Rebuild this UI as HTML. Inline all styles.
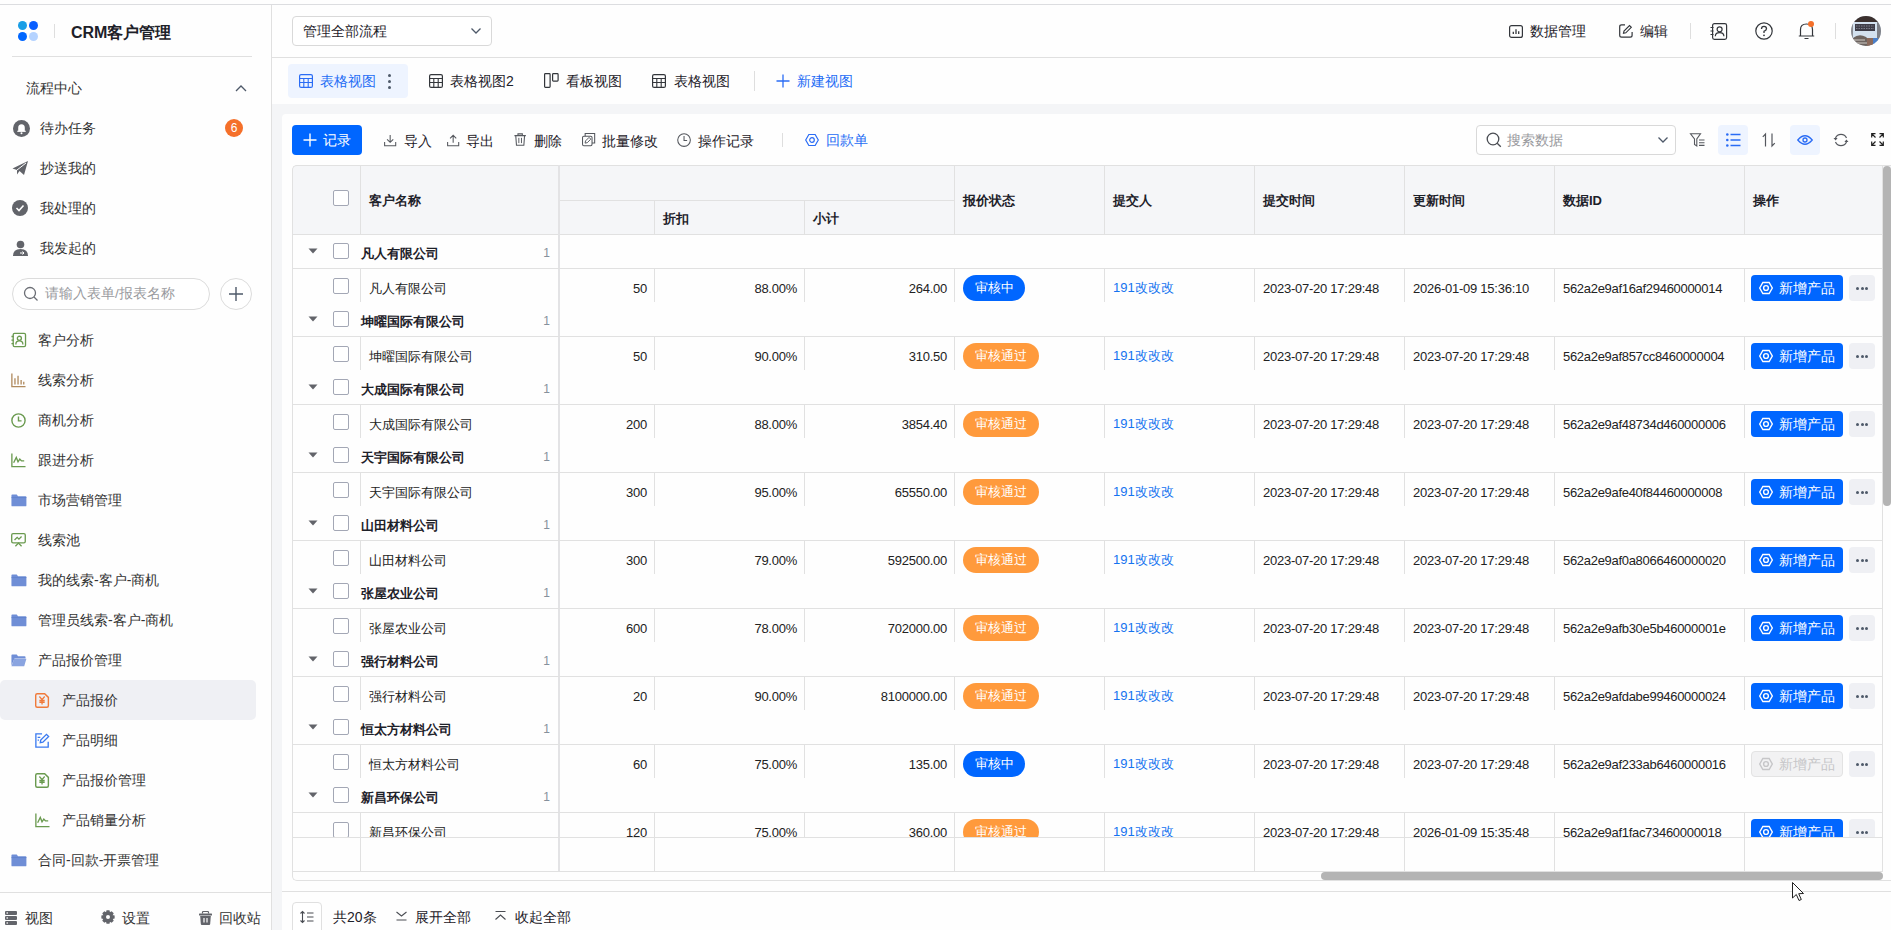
<!DOCTYPE html><html><head><meta charset="utf-8"><style>
*{box-sizing:border-box;margin:0;padding:0}
html,body{width:1891px;height:930px;overflow:hidden;background:#fefefe;font-family:"Liberation Sans",sans-serif;color:#1d2129}
.ab{position:absolute}
.t{position:absolute;white-space:nowrap;line-height:1}
svg{position:absolute;overflow:visible}
</style></head><body>
<div class="ab" style="left:0;top:4px;width:1891px;height:1px;background:#dcdde0"></div>
<div class="ab" style="left:0;top:5px;width:271px;height:925px;background:#fefefe"></div>
<div class="ab" style="left:271px;top:5px;width:1px;height:925px;background:#e0e0e0"></div>
<div class="ab" style="left:17.900000000000002px;top:20.900000000000002px;width:9.4px;height:9.4px;border-radius:50%;background:#199ee6"></div>
<div class="ab" style="left:28.900000000000002px;top:21.1px;width:9.4px;height:9.4px;border-radius:50%;background:#0a5fff"></div>
<div class="ab" style="left:17.900000000000002px;top:31.599999999999998px;width:9.4px;height:9.4px;border-radius:50%;background:#0066ff"></div>
<div class="ab" style="left:28.900000000000002px;top:31.599999999999998px;width:9.4px;height:9.4px;border-radius:50%;background:#b5d3ff"></div>
<div class="ab" style="left:54px;top:24px;width:1px;height:14px;background:#dedede"></div>
<div class="t" style="left:71px;top:24.5px;font-size:16px;font-weight:bold;color:#1d2129">CRM客户管理</div>
<div class="ab" style="left:12px;top:56px;width:240px;height:1px;background:#e0e0e0"></div>
<div class="t" style="left:26px;top:81px;font-size:14px;color:#333">流程中心</div>
<svg style="left:235px;top:84px" width="12" height="8"><path d="M1 7 L6 2 L11 7" fill="none" stroke="#4e5969" stroke-width="1.3"/></svg>
<div class="t" style="left:40px;top:121px;font-size:14px;color:#333">待办任务</div>
<div class="t" style="left:40px;top:161px;font-size:14px;color:#333">抄送我的</div>
<div class="t" style="left:40px;top:201px;font-size:14px;color:#333">我处理的</div>
<div class="t" style="left:40px;top:241px;font-size:14px;color:#333">我发起的</div>
<div class="ab" style="left:12.5px;top:119.8px;width:17px;height:17px;border-radius:50%;background:#62646a"></div>
<svg style="left:12.5px;top:119.8px" width="17" height="17"><path d="M5.2 11 V8 Q5.2 4.3 8.5 4.3 Q11.8 4.3 11.8 8 V11 Z" fill="#fff"/><path d="M4.3 11.3 H12.7" stroke="#fff" stroke-width="1.2"/><circle cx="8.5" cy="13.2" r="1" fill="#fff"/></svg>
<div class="ab" style="left:225px;top:119px;width:18px;height:18px;border-radius:50%;background:#f5702a;color:#fff;font-size:12px;line-height:18px;text-align:center">6</div>
<svg style="left:12px;top:160px" width="17" height="16"><path d="M0.5 8.5 L16 1 L12 15 L7.5 11 L5 14.5 L5 10 Z" fill="#62646a"/><path d="M5 10 L14 3" stroke="#fcfcfd" stroke-width="1"/></svg>
<div class="ab" style="left:12px;top:200px;width:16px;height:16px;border-radius:50%;background:#62646a"></div>
<svg style="left:12px;top:200px" width="16" height="16"><path d="M4.5 8 L7 10.5 L11.5 5.5" fill="none" stroke="#fff" stroke-width="1.6"/></svg>
<svg style="left:12px;top:240px" width="17" height="17"><circle cx="8.5" cy="4.5" r="3.8" fill="#62646a"/><path d="M1 16 Q1 9 8.5 9 Q16 9 16 16 Z" fill="#62646a"/><path d="M8 13 H12 M10.5 11.5 L12 13 L10.5 14.5" fill="none" stroke="#fff" stroke-width="1"/></svg>
<div class="ab" style="left:12px;top:278px;width:198px;height:32px;border:1px solid #dcdcdc;border-radius:16px;background:#fff"></div>
<svg style="left:23px;top:286px" width="16" height="16"><circle cx="7" cy="7" r="5.5" fill="none" stroke="#6b6e75" stroke-width="1.3"/><path d="M11 11 L14.5 14.5" stroke="#6b6e75" stroke-width="1.3"/></svg>
<div class="t" style="left:45px;top:287px;font-size:13.5px;color:#999a9e">请输入表单/报表名称</div>
<div class="ab" style="left:220px;top:278px;width:32px;height:32px;border:1px solid #dcdcdc;border-radius:50%;background:#fff"></div>
<svg style="left:228px;top:286px" width="16" height="16"><path d="M8 1 V15 M1 8 H15" stroke="#4e5969" stroke-width="1.4"/></svg>
<div class="ab" style="left:0;top:680px;width:256px;height:40px;border-radius:5px;background:#eff0f4"></div>
<div class="t" style="left:38px;top:333px;font-size:14px;color:#333">客户分析</div>
<svg style="transform:scale(0.88);transform-origin:0 0;margin-top:1px;left:11px;top:332px" width="17" height="16"><rect x="2.5" y="0.5" width="14" height="15" rx="1.5" fill="none" stroke="#6a9a4f" stroke-width="1.5"/><circle cx="9.5" cy="6" r="2.3" fill="none" stroke="#6a9a4f" stroke-width="1.5"/><path d="M5.5 13 Q5.5 9 9.5 9 Q13.5 9 13.5 13" fill="none" stroke="#6a9a4f" stroke-width="1.5"/><path d="M0.5 4 H3 M0.5 8 H3 M0.5 12 H3" stroke="#6a9a4f" stroke-width="1.5"/></svg>
<div class="t" style="left:38px;top:373px;font-size:14px;color:#333">线索分析</div>
<svg style="transform:scale(0.88);transform-origin:0 0;margin-top:1px;left:11px;top:372px" width="17" height="16"><path d="M1 0.5 V15.5 H16.5 M4.5 6 V13 M8 3 V13 M11.5 8 V13 M14.5 10 V13" fill="none" stroke="#b08a5e" stroke-width="1.5"/></svg>
<div class="t" style="left:38px;top:413px;font-size:14px;color:#333">商机分析</div>
<svg style="transform:scale(0.88);transform-origin:0 0;margin-top:1px;left:11px;top:412px" width="17" height="17"><circle cx="8.5" cy="8.5" r="7.5" fill="none" stroke="#6a9a4f" stroke-width="1.6"/><path d="M8.5 4 V9 H12" fill="none" stroke="#6a9a4f" stroke-width="1.6"/></svg>
<div class="t" style="left:38px;top:453px;font-size:14px;color:#333">跟进分析</div>
<svg style="transform:scale(0.88);transform-origin:0 0;margin-top:1px;left:11px;top:452px" width="17" height="16"><path d="M1 0.5 V15.5 H16.5" fill="none" stroke="#6a9a4f" stroke-width="1.5"/><path d="M3 11 L6 5 L8 10 L10 7 L12 9 L15 9" fill="none" stroke="#6a9a4f" stroke-width="1.5"/></svg>
<div class="t" style="left:38px;top:493px;font-size:14px;color:#333">市场营销管理</div>
<svg style="transform:scale(0.88);transform-origin:0 0;margin-top:1px;left:11px;top:493px" width="18" height="14"><path d="M0.5 1.5 Q0.5 0.5 1.5 0.5 H6.5 L8 2.5 H16.5 Q17.5 2.5 17.5 3.5 V13 Q17.5 14 16.5 14 H1.5 Q0.5 14 0.5 13 Z" fill="#6f8ed6"/><path d="M0.5 4 H17.5" stroke="#5d7fcc" stroke-width="0.8"/></svg>
<div class="t" style="left:38px;top:533px;font-size:14px;color:#333">线索池</div>
<svg style="transform:scale(0.88);transform-origin:0 0;margin-top:1px;left:11px;top:532px" width="17" height="16"><rect x="0.8" y="0.8" width="15.4" height="10.5" rx="1.5" fill="none" stroke="#6a9a4f" stroke-width="1.5"/><path d="M4 8 L7 5 L9 7 L12 4 M5 15 L8.5 11.5 L12 15" fill="none" stroke="#6a9a4f" stroke-width="1.5"/></svg>
<div class="t" style="left:38px;top:573px;font-size:14px;color:#333">我的线索-客户-商机</div>
<svg style="transform:scale(0.88);transform-origin:0 0;margin-top:1px;left:11px;top:573px" width="18" height="14"><path d="M0.5 1.5 Q0.5 0.5 1.5 0.5 H6.5 L8 2.5 H16.5 Q17.5 2.5 17.5 3.5 V13 Q17.5 14 16.5 14 H1.5 Q0.5 14 0.5 13 Z" fill="#6f8ed6"/><path d="M0.5 4 H17.5" stroke="#5d7fcc" stroke-width="0.8"/></svg>
<div class="t" style="left:38px;top:613px;font-size:14px;color:#333">管理员线索-客户-商机</div>
<svg style="transform:scale(0.88);transform-origin:0 0;margin-top:1px;left:11px;top:613px" width="18" height="14"><path d="M0.5 1.5 Q0.5 0.5 1.5 0.5 H6.5 L8 2.5 H16.5 Q17.5 2.5 17.5 3.5 V13 Q17.5 14 16.5 14 H1.5 Q0.5 14 0.5 13 Z" fill="#6f8ed6"/><path d="M0.5 4 H17.5" stroke="#5d7fcc" stroke-width="0.8"/></svg>
<div class="t" style="left:38px;top:653px;font-size:14px;color:#333">产品报价管理</div>
<svg style="transform:scale(0.88);transform-origin:0 0;margin-top:1px;left:11px;top:653px" width="18" height="14"><path d="M0.5 1.5 Q0.5 0.5 1.5 0.5 H6.5 L8 2.5 H15.5 Q16.5 2.5 16.5 3.5 V5 H4 L0.5 13 Z" fill="#6f8ed6"/><path d="M3.5 5.5 H17.5 L15 14 H0.5 Z" fill="#8aa4e0"/></svg>
<div class="t" style="left:62px;top:693px;font-size:14px;color:#333">产品报价</div>
<svg style="transform:scale(0.88);transform-origin:0 0;margin-top:1px;left:35px;top:692px" width="16" height="17"><path d="M2.5 0.8 H11 L15.2 5 V14.5 Q15.2 16.2 13.5 16.2 H2.5 Q0.8 16.2 0.8 14.5 V2.5 Q0.8 0.8 2.5 0.8 Z" fill="none" stroke="#f07a3a" stroke-width="1.6"/><path d="M5 4 L8 7.5 L11 4 M8 7.5 V13 M5 8.5 H11 M5 10.5 H11" fill="none" stroke="#f07a3a" stroke-width="1.5"/></svg>
<div class="t" style="left:62px;top:733px;font-size:14px;color:#333">产品明细</div>
<svg style="transform:scale(0.88);transform-origin:0 0;margin-top:1px;left:35px;top:732px" width="17" height="17"><path d="M8 1 H1 V16 H15 V10" fill="none" stroke="#3a7af0" stroke-width="1.5"/><path d="M6 11 L6.5 8 L13 1.5 L15.5 4 L9 10.5 Z" fill="none" stroke="#3a7af0" stroke-width="1.5"/><path d="M3 5 H6 M3 8 H4.5" stroke="#3a7af0" stroke-width="1.5"/></svg>
<div class="t" style="left:62px;top:773px;font-size:14px;color:#333">产品报价管理</div>
<svg style="transform:scale(0.88);transform-origin:0 0;margin-top:1px;left:35px;top:772px" width="16" height="17"><path d="M2.5 0.8 H11 L15.2 5 V14.5 Q15.2 16.2 13.5 16.2 H2.5 Q0.8 16.2 0.8 14.5 V2.5 Q0.8 0.8 2.5 0.8 Z" fill="none" stroke="#6a9a4f" stroke-width="1.6"/><path d="M5 4 L8 7.5 L11 4 M8 7.5 V13 M5 8.5 H11 M5 10.5 H11" fill="none" stroke="#6a9a4f" stroke-width="1.5"/></svg>
<div class="t" style="left:62px;top:813px;font-size:14px;color:#333">产品销量分析</div>
<svg style="transform:scale(0.88);transform-origin:0 0;margin-top:1px;left:35px;top:812px" width="17" height="16"><path d="M1 0.5 V15.5 H16.5" fill="none" stroke="#6a9a4f" stroke-width="1.5"/><path d="M3 11 L6 5 L8 10 L10 7 L12 9 L15 9" fill="none" stroke="#6a9a4f" stroke-width="1.5"/></svg>
<div class="t" style="left:38px;top:853px;font-size:14px;color:#333">合同-回款-开票管理</div>
<svg style="transform:scale(0.88);transform-origin:0 0;margin-top:1px;left:11px;top:853px" width="18" height="14"><path d="M0.5 1.5 Q0.5 0.5 1.5 0.5 H6.5 L8 2.5 H16.5 Q17.5 2.5 17.5 3.5 V13 Q17.5 14 16.5 14 H1.5 Q0.5 14 0.5 13 Z" fill="#6f8ed6"/><path d="M0.5 4 H17.5" stroke="#5d7fcc" stroke-width="0.8"/></svg>
<div class="ab" style="left:0;top:892px;width:271px;height:1px;background:#e0e0e0"></div>
<svg style="left:5px;top:911px" width="13" height="14"><rect x="0" y="0" width="12" height="4" rx="1" fill="#62646a"/><rect x="0" y="5" width="12" height="4" rx="1" fill="#62646a"/><rect x="0" y="10" width="12" height="4" rx="1" fill="#62646a"/><rect x="1.5" y="1.4" width="1.5" height="1.2" fill="#fefefe"/><rect x="1.5" y="6.4" width="1.5" height="1.2" fill="#fefefe"/><rect x="1.5" y="11.4" width="1.5" height="1.2" fill="#fefefe"/></svg>
<div class="t" style="left:25px;top:911px;font-size:14px;color:#333">视图</div>
<svg style="left:101px;top:910px" width="14" height="14"><path d="M11.57 4.96 L13.64 5.52 L13.64 8.48 L11.57 9.04 L11.67 8.79 L12.74 10.64 L10.64 12.74 L8.79 11.67 L9.04 11.57 L8.48 13.64 L5.52 13.64 L4.96 11.57 L5.21 11.67 L3.36 12.74 L1.26 10.64 L2.33 8.79 L2.43 9.04 L0.36 8.48 L0.36 5.52 L2.43 4.96 L2.33 5.21 L1.26 3.36 L3.36 1.26 L5.21 2.33 L4.96 2.43 L5.52 0.36 L8.48 0.36 L9.04 2.43 L8.79 2.33 L10.64 1.26 L12.74 3.36 L11.67 5.21 Z" fill="#62646a"/><circle cx="7" cy="7" r="2" fill="#fefefe"/></svg>
<div class="t" style="left:122px;top:911px;font-size:14px;color:#333">设置</div>
<svg style="left:199px;top:911px" width="13" height="14"><path d="M3.5 2.5 V1.3 Q3.5 0.5 4.3 0.5 H8.7 Q9.5 0.5 9.5 1.3 V2.5" fill="none" stroke="#62646a" stroke-width="1.2"/><rect x="0" y="2.5" width="13" height="2" rx="0.5" fill="#62646a"/><path d="M1.2 5 H11.8 L11.2 13 Q11.1 14 10.2 14 H2.8 Q1.9 14 1.8 13 Z" fill="#62646a"/><path d="M5 7 V11.5 M8 7 V11.5" stroke="#fefefe" stroke-width="1.2"/></svg>
<div class="t" style="left:219px;top:911px;font-size:14px;color:#333">回收站</div>
<div class="ab" style="left:272px;top:57px;width:1619px;height:1px;background:#e0e0e0"></div>
<div class="ab" style="left:292px;top:16px;width:200px;height:30px;border:1px solid #d9d9d9;border-radius:4px;background:#fff"></div>
<div class="t" style="left:303px;top:24px;font-size:14px;color:#1d2129">管理全部流程</div>
<svg style="left:470px;top:27px" width="12" height="8"><path d="M1.5 1.5 L6 6 L10.5 1.5" fill="none" stroke="#4e5969" stroke-width="1.3"/></svg>
<svg style="left:1509px;top:24.5px" width="14" height="13"><rect x="0.6" y="0.6" width="12.8" height="11.8" rx="2" fill="none" stroke="#33363b" stroke-width="1.2"/><path d="M4.3 9 V6.8 M7 9 V4.3 M9.7 9 V6.3" stroke="#33363b" stroke-width="1.3"/></svg>
<div class="t" style="left:1530px;top:24px;font-size:14px;color:#1d2129">数据管理</div>
<svg style="left:1619px;top:24px" width="14" height="14"><path d="M6 0.8 H2.6 Q0.7 0.8 0.7 2.7 V11.3 Q0.7 13.2 2.6 13.2 H11.2 Q13.1 13.2 13.1 11.3 V8" fill="none" stroke="#33363b" stroke-width="1.2"/><path d="M4.5 9.3 L5 7 L10.5 1.5 L12.3 3.3 L6.8 8.8 Z" fill="none" stroke="#33363b" stroke-width="1.15"/></svg>
<div class="t" style="left:1640px;top:24px;font-size:14px;color:#1d2129">编辑</div>
<div class="ab" style="left:1690px;top:23px;width:1px;height:16px;background:#dedede"></div>
<svg style="left:1710px;top:23px" width="18" height="17"><rect x="2.6" y="0.6" width="14" height="15.8" rx="1.8" fill="none" stroke="#33363b" stroke-width="1.2"/><circle cx="9.6" cy="6.3" r="2.5" fill="none" stroke="#33363b" stroke-width="1.2"/><path d="M5.3 13.3 Q5.3 9.6 9.6 9.6 Q13.9 9.6 13.9 13.3" fill="none" stroke="#33363b" stroke-width="1.2"/><path d="M0.5 4.5 H3.5 M0.5 8 H3.5 M0.5 11.5 H3.5" stroke="#33363b" stroke-width="1.1"/></svg>
<svg style="left:1755px;top:22px" width="18" height="18"><circle cx="9" cy="9" r="8.2" fill="none" stroke="#33363b" stroke-width="1.2"/><path d="M6.5 7 Q6.5 4.3 9 4.3 Q11.5 4.3 11.5 6.8 Q11.5 8.3 9 9.3 V11" fill="none" stroke="#33363b" stroke-width="1.3"/><circle cx="9" cy="13.3" r="0.9" fill="#33363b"/></svg>
<svg style="left:1798px;top:22px" width="17" height="18"><path d="M2.5 14 V7.5 Q2.5 2 8.5 2 Q14.5 2 14.5 7.5 V14 Z M0.8 14 H16.2 M6.5 16.5 H10.5" fill="none" stroke="#33363b" stroke-width="1.2"/></svg>
<div class="ab" style="left:1808px;top:21px;width:6px;height:6px;border-radius:50%;background:#f5702a"></div>
<div class="ab" style="left:1835px;top:23px;width:1px;height:16px;background:#dedede"></div>
<svg style="left:1851px;top:16px" width="30" height="30"><defs><clipPath id="av"><circle cx="15" cy="15" r="15"/></clipPath></defs><g clip-path="url(#av)"><rect width="30" height="30" fill="#d3e1ef"/><rect x="0" y="0" width="30" height="6" fill="#3b302e"/><rect x="26" y="5" width="4" height="25" fill="#7d7f86"/><rect x="0" y="5" width="2" height="20" fill="#8a8c92"/><rect x="4" y="8" width="20" height="7" fill="#3e3d48"/><path d="M5 10 H23 M5 12.5 H23" stroke="#8d8f9c" stroke-width="0.8" stroke-dasharray="1.5 1"/><path d="M2 30 L2 22 Q8 17 15 21 L23 29 L23 30 Z" fill="#6d6460"/><path d="M3 24 H14 M4 27 H16" stroke="#cfc9c4" stroke-width="1.2"/><rect x="16" y="22" width="6" height="8" fill="#8b6a5c"/><rect x="22" y="22" width="5" height="6" fill="#4a7fc8"/></g></svg>
<div class="ab" style="left:288px;top:64px;width:120px;height:34px;border-radius:4px;background:#eef4ff"></div>
<svg style="left:299px;top:74px" width="14" height="14"><rect x="0.6" y="0.6" width="12.8" height="12.8" rx="1.5" fill="none" stroke="#2a6cf5" stroke-width="1.2"/><path d="M0.6 4.5 H13.4 M0.6 8.5 H13.4 M4.8 4.5 V13.4 M9.2 4.5 V13.4" stroke="#2a6cf5" stroke-width="1.1"/></svg>
<div class="t" style="left:320px;top:74px;font-size:14px;color:#1d6cf5">表格视图</div>
<div class="ab" style="left:388px;top:74px;width:3px;height:3px;border-radius:50%;background:#4e5969"></div>
<div class="ab" style="left:388px;top:80px;width:3px;height:3px;border-radius:50%;background:#4e5969"></div>
<div class="ab" style="left:388px;top:86px;width:3px;height:3px;border-radius:50%;background:#4e5969"></div>
<svg style="left:429px;top:74px" width="14" height="14"><rect x="0.6" y="0.6" width="12.8" height="12.8" rx="1.5" fill="none" stroke="#33363b" stroke-width="1.2"/><path d="M0.6 4.5 H13.4 M0.6 8.5 H13.4 M4.8 4.5 V13.4 M9.2 4.5 V13.4" stroke="#33363b" stroke-width="1.1"/></svg>
<div class="t" style="left:450px;top:74px;font-size:14px;color:#1d2129">表格视图2</div>
<svg style="left:544px;top:73px" width="15" height="15"><rect x="0.6" y="0.6" width="5.5" height="13.8" rx="0.8" fill="none" stroke="#33363b" stroke-width="1.2"/><rect x="8.6" y="0.6" width="5.5" height="7.5" rx="0.8" fill="none" stroke="#33363b" stroke-width="1.2"/></svg>
<div class="t" style="left:566px;top:74px;font-size:14px;color:#1d2129">看板视图</div>
<svg style="left:652px;top:74px" width="14" height="14"><rect x="0.6" y="0.6" width="12.8" height="12.8" rx="1.5" fill="none" stroke="#33363b" stroke-width="1.2"/><path d="M0.6 4.5 H13.4 M0.6 8.5 H13.4 M4.8 4.5 V13.4 M9.2 4.5 V13.4" stroke="#33363b" stroke-width="1.1"/></svg>
<div class="t" style="left:674px;top:74px;font-size:14px;color:#1d2129">表格视图</div>
<div class="ab" style="left:754px;top:71px;width:1px;height:20px;background:#dedede"></div>
<svg style="left:776px;top:74px" width="14" height="14"><path d="M7 0.5 V13.5 M0.5 7 H13.5" stroke="#2a6cf5" stroke-width="1.3"/></svg>
<div class="t" style="left:797px;top:74px;font-size:14px;color:#1d6cf5">新建视图</div>
<div class="ab" style="left:272px;top:104px;width:1619px;height:826px;background:#f4f5f7"></div>
<div class="ab" style="left:282px;top:114px;width:1609px;height:816px;background:#fefefe;border-top-left-radius:4px"></div>
<div class="ab" style="left:292px;top:125px;width:70px;height:30px;border-radius:4px;background:#0066ff"></div>
<svg style="left:303px;top:133px" width="14" height="14"><path d="M7 0.5 V13.5 M0.5 7 H13.5" stroke="#fff" stroke-width="1.4"/></svg>
<div class="t" style="left:323px;top:133px;font-size:14px;color:#fff">记录</div>
<div class="t" style="left:404px;top:134px;font-size:14px;color:#1d2129">导入</div>
<svg style="transform:scale(0.88);transform-origin:0 0;margin:1px 0 0 1px;left:383px;top:133px" width="14" height="14"><path d="M7 1 V9.5 M3.5 6 L7 9.5 L10.5 6 M0.7 9 V13.3 H13.3 V9" fill="none" stroke="#55585e" stroke-width="1.2"/></svg>
<div class="t" style="left:466px;top:134px;font-size:14px;color:#1d2129">导出</div>
<svg style="transform:scale(0.88);transform-origin:0 0;margin:1px 0 0 1px;left:446px;top:133px" width="14" height="14"><path d="M7 10 V1.5 M3.5 5 L7 1.5 L10.5 5 M0.7 9 V13.3 H13.3 V9" fill="none" stroke="#55585e" stroke-width="1.2"/></svg>
<div class="t" style="left:534px;top:134px;font-size:14px;color:#1d2129">删除</div>
<svg style="transform:scale(0.88);transform-origin:0 0;margin:1px 0 0 1px;left:513px;top:132px" width="14" height="15"><path d="M4.5 2.5 V1 H9.5 V2.5 M0.5 3 H13.5 M2 3 L2.8 14 H11.2 L12 3" fill="none" stroke="#55585e" stroke-width="1.2"/><path d="M5.5 5.5 V11.5 M8.5 5.5 V11.5" stroke="#55585e" stroke-width="1.1"/></svg>
<div class="t" style="left:602px;top:134px;font-size:14px;color:#1d2129">批量修改</div>
<svg style="transform:scale(0.88);transform-origin:0 0;margin:1px 0 0 1px;left:581px;top:132px" width="15" height="15"><rect x="0.6" y="3.6" width="10.8" height="10.8" rx="1.5" fill="none" stroke="#55585e" stroke-width="1.2"/><path d="M3.6 3.6 V0.6 H14.4 V11.4 H11.4" fill="none" stroke="#55585e" stroke-width="1.2"/><path d="M3.5 11.5 L4 9 L8 5 L10 7 L6 11 Z" fill="none" stroke="#55585e" stroke-width="1.1"/></svg>
<div class="t" style="left:698px;top:134px;font-size:14px;color:#1d2129">操作记录</div>
<svg style="transform:scale(0.88);transform-origin:0 0;margin:1px 0 0 1px;left:676px;top:132px" width="16" height="16"><circle cx="8" cy="8" r="7.2" fill="none" stroke="#55585e" stroke-width="1.2"/><path d="M8 3.5 V8.5 H11.5" fill="none" stroke="#55585e" stroke-width="1.2"/></svg>
<div class="ab" style="left:782px;top:133px;width:1px;height:14px;background:#dedede"></div>
<svg style="left:805px;top:133px" width="14" height="14"><path d="M0.7 7 L3.85 1.5 H10.15 L13.3 7 L10.15 12.5 H3.85 Z" fill="none" stroke="#2a6cf5" stroke-width="1.2"/><circle cx="7" cy="7" r="2.3" fill="none" stroke="#2a6cf5" stroke-width="1.2"/></svg>
<div class="t" style="left:826px;top:133px;font-size:14px;color:#1d6cf5">回款单</div>
<div class="ab" style="left:1476px;top:125px;width:200px;height:30px;border:1px solid #d9d9d9;border-radius:4px;background:#fff"></div>
<svg style="left:1486px;top:132px" width="16" height="16"><circle cx="7" cy="7" r="5.8" fill="none" stroke="#4a4d53" stroke-width="1.3"/><path d="M11.2 11.2 L14.8 14.8" stroke="#4a4d53" stroke-width="1.3"/></svg>
<div class="t" style="left:1507px;top:133px;font-size:14px;color:#999a9e">搜索数据</div>
<svg style="left:1657px;top:136px" width="12" height="8"><path d="M1.5 1.5 L6 6 L10.5 1.5" fill="none" stroke="#4e5969" stroke-width="1.3"/></svg>
<svg style="left:1690px;top:133px" width="15" height="14"><path d="M0.5 0.8 H10.5 L6.8 6 V13 L4.5 11.5 V6 Z" fill="none" stroke="#55585e" stroke-width="1.1"/><path d="M9 7 H14.5 M9 9.7 H14.5 M9 12.4 H14.5" stroke="#55585e" stroke-width="1.1"/></svg>
<div class="ab" style="left:1718px;top:125px;width:30px;height:30px;border-radius:4px;background:#eef4ff"></div>
<svg style="left:1726px;top:133px" width="15" height="14"><circle cx="1.3" cy="1.5" r="1.3" fill="#2a6cf5"/><circle cx="1.3" cy="7" r="1.3" fill="#2a6cf5"/><circle cx="1.3" cy="12.5" r="1.3" fill="#2a6cf5"/><path d="M4.5 1.5 H14.5 M4.5 7 H14.5 M4.5 12.5 H14.5" stroke="#2a6cf5" stroke-width="1.4"/></svg>
<svg style="left:1762px;top:133px" width="14" height="14"><path d="M3.5 13.5 V1 L0.8 3.8 M10 0.5 V13 L12.8 10.2" fill="none" stroke="#55585e" stroke-width="1.2"/></svg>
<div class="ab" style="left:1790px;top:125px;width:30px;height:30px;border-radius:4px;background:#eef4ff"></div>
<svg style="left:1797px;top:134px" width="16" height="12"><path d="M0.8 6 Q8 -2.5 15.2 6 Q8 14.5 0.8 6 Z" fill="none" stroke="#2a6cf5" stroke-width="1.3"/><circle cx="8" cy="6" r="2" fill="none" stroke="#2a6cf5" stroke-width="1.3"/></svg>
<svg style="left:1833px;top:132px" width="16" height="16"><path d="M13.5 6 A6 6 0 0 0 2.5 6 M2.5 10 A6 6 0 0 0 13.5 10" fill="none" stroke="#55585e" stroke-width="1.2"/><path d="M0.5 6 L2.6 8.5 L4.6 6 Z M15.5 10 L13.4 7.5 L11.4 10 Z" fill="#55585e"/></svg>
<svg style="left:1871px;top:133px" width="13" height="13"><path d="M0.7 4.5 V0.7 H4.5 M1 1 L4.5 4.5 M8.5 0.7 H12.3 V4.5 M12 1 L8.5 4.5 M0.7 8.5 V12.3 H4.5 M1 12 L4.5 8.5 M12.3 8.5 V12.3 H8.5 M12 12 L8.5 8.5" fill="none" stroke="#222" stroke-width="1.2"/></svg>
<div class="ab" style="left:292px;top:165px;width:1611px;height:70px;background:#f5f6f8;border-top-left-radius:5px"></div>
<div class="ab" style="left:292px;top:165px;width:1611px;height:716px;border:1px solid #e1e1e1;border-right:none;border-radius:5px 0 0 5px"></div>
<div class="ab" style="left:292px;top:234px;width:1591px;height:1px;background:#e1e1e1"></div>
<div class="ab" style="left:560px;top:200px;width:394px;height:1px;background:#e1e1e1"></div>
<div class="ab" style="left:654px;top:200px;width:1px;height:34px;background:#e1e1e1"></div>
<div class="ab" style="left:804px;top:200px;width:1px;height:34px;background:#e1e1e1"></div>
<div class="ab" style="left:360px;top:165px;width:1px;height:69px;background:#e1e1e1"></div>
<div class="ab" style="left:954px;top:165px;width:1px;height:69px;background:#e1e1e1"></div>
<div class="ab" style="left:1104px;top:165px;width:1px;height:69px;background:#e1e1e1"></div>
<div class="ab" style="left:1254px;top:165px;width:1px;height:69px;background:#e1e1e1"></div>
<div class="ab" style="left:1404px;top:165px;width:1px;height:69px;background:#e1e1e1"></div>
<div class="ab" style="left:1554px;top:165px;width:1px;height:69px;background:#e1e1e1"></div>
<div class="ab" style="left:1744px;top:165px;width:1px;height:69px;background:#e1e1e1"></div>
<div class="ab" style="left:558px;top:165px;width:2px;height:706px;background:#e3e3e5"></div>
<div class="ab" style="left:1882px;top:165px;width:1px;height:706px;background:#e1e1e1"></div>
<div class="t" style="left:369px;top:194px;font-size:13px;font-weight:bold;color:#1d2129">客户名称</div>
<div class="t" style="left:663px;top:212px;font-size:13px;font-weight:bold;color:#1d2129">折扣</div>
<div class="t" style="left:813px;top:212px;font-size:13px;font-weight:bold;color:#1d2129">小计</div>
<div class="t" style="left:963px;top:194px;font-size:13px;font-weight:bold;color:#1d2129">报价状态</div>
<div class="t" style="left:1113px;top:194px;font-size:13px;font-weight:bold;color:#1d2129">提交人</div>
<div class="t" style="left:1263px;top:194px;font-size:13px;font-weight:bold;color:#1d2129">提交时间</div>
<div class="t" style="left:1413px;top:194px;font-size:13px;font-weight:bold;color:#1d2129">更新时间</div>
<div class="t" style="left:1563px;top:194px;font-size:13px;font-weight:bold;color:#1d2129">数据ID</div>
<div class="t" style="left:1753px;top:194px;font-size:13px;font-weight:bold;color:#1d2129">操作</div>
<div class="ab" style="left:333px;top:190px;width:16px;height:16px;border:1px solid #a3a7b5;border-radius:2px;background:#fff"></div>
<div class="ab" style="left:293px;top:235px;width:1590px;height:602px;overflow:hidden">
<svg style="left:15px;top:13px" width="10" height="6"><path d="M0.5 0.5 H9.5 L5 5.5 Z" fill="#62646a"/></svg>
<div class="ab" style="left:40px;top:8px;width:16px;height:16px;border:1px solid #a3a7b5;border-radius:2px;background:#fff"></div>
<div class="t" style="left:68px;top:11.5px;font-size:13px;font-weight:bold;color:#1d2129">凡人有限公司</div>
<div class="t" style="right:1333px;top:12px;font-size:12px;color:#86909c">1</div>
<div class="ab" style="left:0px;top:33px;width:1590px;height:1px;background:#e1e1e1"></div>
<div class="ab" style="left:40px;top:43px;width:16px;height:16px;border:1px solid #a3a7b5;border-radius:2px;background:#fff"></div>
<div class="ab" style="left:67px;top:33px;width:1px;height:34px;background:#e1e1e1"></div>
<div class="ab" style="left:361px;top:33px;width:1px;height:34px;background:#e1e1e1"></div>
<div class="ab" style="left:511px;top:33px;width:1px;height:34px;background:#e1e1e1"></div>
<div class="ab" style="left:661px;top:33px;width:1px;height:34px;background:#e1e1e1"></div>
<div class="ab" style="left:811px;top:33px;width:1px;height:34px;background:#e1e1e1"></div>
<div class="ab" style="left:961px;top:33px;width:1px;height:34px;background:#e1e1e1"></div>
<div class="ab" style="left:1111px;top:33px;width:1px;height:34px;background:#e1e1e1"></div>
<div class="ab" style="left:1261px;top:33px;width:1px;height:34px;background:#e1e1e1"></div>
<div class="ab" style="left:1451px;top:33px;width:1px;height:34px;background:#e1e1e1"></div>
<div class="t" style="left:76px;top:47px;font-size:13px;color:#222">凡人有限公司</div>
<div class="t" style="right:1236px;top:47px;font-size:13px;color:#222;letter-spacing:-0.25px">50</div>
<div class="t" style="right:1086px;top:47px;font-size:13px;color:#222;letter-spacing:-0.25px">88.00%</div>
<div class="t" style="right:936px;top:47px;font-size:13px;color:#222;letter-spacing:-0.25px">264.00</div>
<div class="ab" style="left:670px;top:40px;width:62px;height:26px;border-radius:13px;background:#0066ff;color:#fff;font-size:13px;line-height:26px;text-align:center">审核中</div>
<div class="t" style="left:820px;top:46px;font-size:13px;color:#1473f0">191改改改</div>
<div class="t" style="left:970px;top:47px;font-size:13px;color:#222;letter-spacing:-0.25px">2023-07-20 17:29:48</div>
<div class="t" style="left:1120px;top:47px;font-size:13px;color:#222;letter-spacing:-0.25px">2026-01-09 15:36:10</div>
<div class="t" style="left:1270px;top:47px;font-size:13px;color:#222;letter-spacing:-0.3px">562a2e9af16af29460000014</div>
<div class="ab" style="left:1458px;top:40px;width:92px;height:26px;border-radius:4px;background:#0066ff"></div>
<svg style="left:1466px;top:46px" width="14" height="14"><path d="M0.7 7 L3.85 1.5 H10.15 L13.3 7 L10.15 12.5 H3.85 Z" fill="none" stroke="#fff" stroke-width="1.4"/><circle cx="7" cy="7" r="2.4" fill="none" stroke="#fff" stroke-width="1.4"/></svg>
<div class="t" style="left:1486px;top:46px;font-size:14px;color:#fff">新增产品</div>
<div class="ab" style="left:1556px;top:40px;width:26px;height:26px;border-radius:4px;background:#eff0f4"></div>
<div class="ab" style="left:1563.0px;top:52px;width:3px;height:3px;border-radius:50%;background:#4e5969"></div>
<div class="ab" style="left:1567.5px;top:52px;width:3px;height:3px;border-radius:50%;background:#4e5969"></div>
<div class="ab" style="left:1572.0px;top:52px;width:3px;height:3px;border-radius:50%;background:#4e5969"></div>
<svg style="left:15px;top:81px" width="10" height="6"><path d="M0.5 0.5 H9.5 L5 5.5 Z" fill="#62646a"/></svg>
<div class="ab" style="left:40px;top:76px;width:16px;height:16px;border:1px solid #a3a7b5;border-radius:2px;background:#fff"></div>
<div class="t" style="left:68px;top:79.5px;font-size:13px;font-weight:bold;color:#1d2129">坤曜国际有限公司</div>
<div class="t" style="right:1333px;top:80px;font-size:12px;color:#86909c">1</div>
<div class="ab" style="left:0px;top:101px;width:1590px;height:1px;background:#e1e1e1"></div>
<div class="ab" style="left:40px;top:111px;width:16px;height:16px;border:1px solid #a3a7b5;border-radius:2px;background:#fff"></div>
<div class="ab" style="left:67px;top:101px;width:1px;height:34px;background:#e1e1e1"></div>
<div class="ab" style="left:361px;top:101px;width:1px;height:34px;background:#e1e1e1"></div>
<div class="ab" style="left:511px;top:101px;width:1px;height:34px;background:#e1e1e1"></div>
<div class="ab" style="left:661px;top:101px;width:1px;height:34px;background:#e1e1e1"></div>
<div class="ab" style="left:811px;top:101px;width:1px;height:34px;background:#e1e1e1"></div>
<div class="ab" style="left:961px;top:101px;width:1px;height:34px;background:#e1e1e1"></div>
<div class="ab" style="left:1111px;top:101px;width:1px;height:34px;background:#e1e1e1"></div>
<div class="ab" style="left:1261px;top:101px;width:1px;height:34px;background:#e1e1e1"></div>
<div class="ab" style="left:1451px;top:101px;width:1px;height:34px;background:#e1e1e1"></div>
<div class="t" style="left:76px;top:115px;font-size:13px;color:#222">坤曜国际有限公司</div>
<div class="t" style="right:1236px;top:115px;font-size:13px;color:#222;letter-spacing:-0.25px">50</div>
<div class="t" style="right:1086px;top:115px;font-size:13px;color:#222;letter-spacing:-0.25px">90.00%</div>
<div class="t" style="right:936px;top:115px;font-size:13px;color:#222;letter-spacing:-0.25px">310.50</div>
<div class="ab" style="left:670px;top:108px;width:76px;height:26px;border-radius:13px;background:#ff9a3c;color:#fff;font-size:13px;line-height:26px;text-align:center">审核通过</div>
<div class="t" style="left:820px;top:114px;font-size:13px;color:#1473f0">191改改改</div>
<div class="t" style="left:970px;top:115px;font-size:13px;color:#222;letter-spacing:-0.25px">2023-07-20 17:29:48</div>
<div class="t" style="left:1120px;top:115px;font-size:13px;color:#222;letter-spacing:-0.25px">2023-07-20 17:29:48</div>
<div class="t" style="left:1270px;top:115px;font-size:13px;color:#222;letter-spacing:-0.3px">562a2e9af857cc8460000004</div>
<div class="ab" style="left:1458px;top:108px;width:92px;height:26px;border-radius:4px;background:#0066ff"></div>
<svg style="left:1466px;top:114px" width="14" height="14"><path d="M0.7 7 L3.85 1.5 H10.15 L13.3 7 L10.15 12.5 H3.85 Z" fill="none" stroke="#fff" stroke-width="1.4"/><circle cx="7" cy="7" r="2.4" fill="none" stroke="#fff" stroke-width="1.4"/></svg>
<div class="t" style="left:1486px;top:114px;font-size:14px;color:#fff">新增产品</div>
<div class="ab" style="left:1556px;top:108px;width:26px;height:26px;border-radius:4px;background:#eff0f4"></div>
<div class="ab" style="left:1563.0px;top:120px;width:3px;height:3px;border-radius:50%;background:#4e5969"></div>
<div class="ab" style="left:1567.5px;top:120px;width:3px;height:3px;border-radius:50%;background:#4e5969"></div>
<div class="ab" style="left:1572.0px;top:120px;width:3px;height:3px;border-radius:50%;background:#4e5969"></div>
<svg style="left:15px;top:149px" width="10" height="6"><path d="M0.5 0.5 H9.5 L5 5.5 Z" fill="#62646a"/></svg>
<div class="ab" style="left:40px;top:144px;width:16px;height:16px;border:1px solid #a3a7b5;border-radius:2px;background:#fff"></div>
<div class="t" style="left:68px;top:147.5px;font-size:13px;font-weight:bold;color:#1d2129">大成国际有限公司</div>
<div class="t" style="right:1333px;top:148px;font-size:12px;color:#86909c">1</div>
<div class="ab" style="left:0px;top:169px;width:1590px;height:1px;background:#e1e1e1"></div>
<div class="ab" style="left:40px;top:179px;width:16px;height:16px;border:1px solid #a3a7b5;border-radius:2px;background:#fff"></div>
<div class="ab" style="left:67px;top:169px;width:1px;height:34px;background:#e1e1e1"></div>
<div class="ab" style="left:361px;top:169px;width:1px;height:34px;background:#e1e1e1"></div>
<div class="ab" style="left:511px;top:169px;width:1px;height:34px;background:#e1e1e1"></div>
<div class="ab" style="left:661px;top:169px;width:1px;height:34px;background:#e1e1e1"></div>
<div class="ab" style="left:811px;top:169px;width:1px;height:34px;background:#e1e1e1"></div>
<div class="ab" style="left:961px;top:169px;width:1px;height:34px;background:#e1e1e1"></div>
<div class="ab" style="left:1111px;top:169px;width:1px;height:34px;background:#e1e1e1"></div>
<div class="ab" style="left:1261px;top:169px;width:1px;height:34px;background:#e1e1e1"></div>
<div class="ab" style="left:1451px;top:169px;width:1px;height:34px;background:#e1e1e1"></div>
<div class="t" style="left:76px;top:183px;font-size:13px;color:#222">大成国际有限公司</div>
<div class="t" style="right:1236px;top:183px;font-size:13px;color:#222;letter-spacing:-0.25px">200</div>
<div class="t" style="right:1086px;top:183px;font-size:13px;color:#222;letter-spacing:-0.25px">88.00%</div>
<div class="t" style="right:936px;top:183px;font-size:13px;color:#222;letter-spacing:-0.25px">3854.40</div>
<div class="ab" style="left:670px;top:176px;width:76px;height:26px;border-radius:13px;background:#ff9a3c;color:#fff;font-size:13px;line-height:26px;text-align:center">审核通过</div>
<div class="t" style="left:820px;top:182px;font-size:13px;color:#1473f0">191改改改</div>
<div class="t" style="left:970px;top:183px;font-size:13px;color:#222;letter-spacing:-0.25px">2023-07-20 17:29:48</div>
<div class="t" style="left:1120px;top:183px;font-size:13px;color:#222;letter-spacing:-0.25px">2023-07-20 17:29:48</div>
<div class="t" style="left:1270px;top:183px;font-size:13px;color:#222;letter-spacing:-0.3px">562a2e9af48734d460000006</div>
<div class="ab" style="left:1458px;top:176px;width:92px;height:26px;border-radius:4px;background:#0066ff"></div>
<svg style="left:1466px;top:182px" width="14" height="14"><path d="M0.7 7 L3.85 1.5 H10.15 L13.3 7 L10.15 12.5 H3.85 Z" fill="none" stroke="#fff" stroke-width="1.4"/><circle cx="7" cy="7" r="2.4" fill="none" stroke="#fff" stroke-width="1.4"/></svg>
<div class="t" style="left:1486px;top:182px;font-size:14px;color:#fff">新增产品</div>
<div class="ab" style="left:1556px;top:176px;width:26px;height:26px;border-radius:4px;background:#eff0f4"></div>
<div class="ab" style="left:1563.0px;top:188px;width:3px;height:3px;border-radius:50%;background:#4e5969"></div>
<div class="ab" style="left:1567.5px;top:188px;width:3px;height:3px;border-radius:50%;background:#4e5969"></div>
<div class="ab" style="left:1572.0px;top:188px;width:3px;height:3px;border-radius:50%;background:#4e5969"></div>
<svg style="left:15px;top:217px" width="10" height="6"><path d="M0.5 0.5 H9.5 L5 5.5 Z" fill="#62646a"/></svg>
<div class="ab" style="left:40px;top:212px;width:16px;height:16px;border:1px solid #a3a7b5;border-radius:2px;background:#fff"></div>
<div class="t" style="left:68px;top:215.5px;font-size:13px;font-weight:bold;color:#1d2129">天宇国际有限公司</div>
<div class="t" style="right:1333px;top:216px;font-size:12px;color:#86909c">1</div>
<div class="ab" style="left:0px;top:237px;width:1590px;height:1px;background:#e1e1e1"></div>
<div class="ab" style="left:40px;top:247px;width:16px;height:16px;border:1px solid #a3a7b5;border-radius:2px;background:#fff"></div>
<div class="ab" style="left:67px;top:237px;width:1px;height:34px;background:#e1e1e1"></div>
<div class="ab" style="left:361px;top:237px;width:1px;height:34px;background:#e1e1e1"></div>
<div class="ab" style="left:511px;top:237px;width:1px;height:34px;background:#e1e1e1"></div>
<div class="ab" style="left:661px;top:237px;width:1px;height:34px;background:#e1e1e1"></div>
<div class="ab" style="left:811px;top:237px;width:1px;height:34px;background:#e1e1e1"></div>
<div class="ab" style="left:961px;top:237px;width:1px;height:34px;background:#e1e1e1"></div>
<div class="ab" style="left:1111px;top:237px;width:1px;height:34px;background:#e1e1e1"></div>
<div class="ab" style="left:1261px;top:237px;width:1px;height:34px;background:#e1e1e1"></div>
<div class="ab" style="left:1451px;top:237px;width:1px;height:34px;background:#e1e1e1"></div>
<div class="t" style="left:76px;top:251px;font-size:13px;color:#222">天宇国际有限公司</div>
<div class="t" style="right:1236px;top:251px;font-size:13px;color:#222;letter-spacing:-0.25px">300</div>
<div class="t" style="right:1086px;top:251px;font-size:13px;color:#222;letter-spacing:-0.25px">95.00%</div>
<div class="t" style="right:936px;top:251px;font-size:13px;color:#222;letter-spacing:-0.25px">65550.00</div>
<div class="ab" style="left:670px;top:244px;width:76px;height:26px;border-radius:13px;background:#ff9a3c;color:#fff;font-size:13px;line-height:26px;text-align:center">审核通过</div>
<div class="t" style="left:820px;top:250px;font-size:13px;color:#1473f0">191改改改</div>
<div class="t" style="left:970px;top:251px;font-size:13px;color:#222;letter-spacing:-0.25px">2023-07-20 17:29:48</div>
<div class="t" style="left:1120px;top:251px;font-size:13px;color:#222;letter-spacing:-0.25px">2023-07-20 17:29:48</div>
<div class="t" style="left:1270px;top:251px;font-size:13px;color:#222;letter-spacing:-0.3px">562a2e9afe40f84460000008</div>
<div class="ab" style="left:1458px;top:244px;width:92px;height:26px;border-radius:4px;background:#0066ff"></div>
<svg style="left:1466px;top:250px" width="14" height="14"><path d="M0.7 7 L3.85 1.5 H10.15 L13.3 7 L10.15 12.5 H3.85 Z" fill="none" stroke="#fff" stroke-width="1.4"/><circle cx="7" cy="7" r="2.4" fill="none" stroke="#fff" stroke-width="1.4"/></svg>
<div class="t" style="left:1486px;top:250px;font-size:14px;color:#fff">新增产品</div>
<div class="ab" style="left:1556px;top:244px;width:26px;height:26px;border-radius:4px;background:#eff0f4"></div>
<div class="ab" style="left:1563.0px;top:256px;width:3px;height:3px;border-radius:50%;background:#4e5969"></div>
<div class="ab" style="left:1567.5px;top:256px;width:3px;height:3px;border-radius:50%;background:#4e5969"></div>
<div class="ab" style="left:1572.0px;top:256px;width:3px;height:3px;border-radius:50%;background:#4e5969"></div>
<svg style="left:15px;top:285px" width="10" height="6"><path d="M0.5 0.5 H9.5 L5 5.5 Z" fill="#62646a"/></svg>
<div class="ab" style="left:40px;top:280px;width:16px;height:16px;border:1px solid #a3a7b5;border-radius:2px;background:#fff"></div>
<div class="t" style="left:68px;top:283.5px;font-size:13px;font-weight:bold;color:#1d2129">山田材料公司</div>
<div class="t" style="right:1333px;top:284px;font-size:12px;color:#86909c">1</div>
<div class="ab" style="left:0px;top:305px;width:1590px;height:1px;background:#e1e1e1"></div>
<div class="ab" style="left:40px;top:315px;width:16px;height:16px;border:1px solid #a3a7b5;border-radius:2px;background:#fff"></div>
<div class="ab" style="left:67px;top:305px;width:1px;height:34px;background:#e1e1e1"></div>
<div class="ab" style="left:361px;top:305px;width:1px;height:34px;background:#e1e1e1"></div>
<div class="ab" style="left:511px;top:305px;width:1px;height:34px;background:#e1e1e1"></div>
<div class="ab" style="left:661px;top:305px;width:1px;height:34px;background:#e1e1e1"></div>
<div class="ab" style="left:811px;top:305px;width:1px;height:34px;background:#e1e1e1"></div>
<div class="ab" style="left:961px;top:305px;width:1px;height:34px;background:#e1e1e1"></div>
<div class="ab" style="left:1111px;top:305px;width:1px;height:34px;background:#e1e1e1"></div>
<div class="ab" style="left:1261px;top:305px;width:1px;height:34px;background:#e1e1e1"></div>
<div class="ab" style="left:1451px;top:305px;width:1px;height:34px;background:#e1e1e1"></div>
<div class="t" style="left:76px;top:319px;font-size:13px;color:#222">山田材料公司</div>
<div class="t" style="right:1236px;top:319px;font-size:13px;color:#222;letter-spacing:-0.25px">300</div>
<div class="t" style="right:1086px;top:319px;font-size:13px;color:#222;letter-spacing:-0.25px">79.00%</div>
<div class="t" style="right:936px;top:319px;font-size:13px;color:#222;letter-spacing:-0.25px">592500.00</div>
<div class="ab" style="left:670px;top:312px;width:76px;height:26px;border-radius:13px;background:#ff9a3c;color:#fff;font-size:13px;line-height:26px;text-align:center">审核通过</div>
<div class="t" style="left:820px;top:318px;font-size:13px;color:#1473f0">191改改改</div>
<div class="t" style="left:970px;top:319px;font-size:13px;color:#222;letter-spacing:-0.25px">2023-07-20 17:29:48</div>
<div class="t" style="left:1120px;top:319px;font-size:13px;color:#222;letter-spacing:-0.25px">2023-07-20 17:29:48</div>
<div class="t" style="left:1270px;top:319px;font-size:13px;color:#222;letter-spacing:-0.3px">562a2e9af0a8066460000020</div>
<div class="ab" style="left:1458px;top:312px;width:92px;height:26px;border-radius:4px;background:#0066ff"></div>
<svg style="left:1466px;top:318px" width="14" height="14"><path d="M0.7 7 L3.85 1.5 H10.15 L13.3 7 L10.15 12.5 H3.85 Z" fill="none" stroke="#fff" stroke-width="1.4"/><circle cx="7" cy="7" r="2.4" fill="none" stroke="#fff" stroke-width="1.4"/></svg>
<div class="t" style="left:1486px;top:318px;font-size:14px;color:#fff">新增产品</div>
<div class="ab" style="left:1556px;top:312px;width:26px;height:26px;border-radius:4px;background:#eff0f4"></div>
<div class="ab" style="left:1563.0px;top:324px;width:3px;height:3px;border-radius:50%;background:#4e5969"></div>
<div class="ab" style="left:1567.5px;top:324px;width:3px;height:3px;border-radius:50%;background:#4e5969"></div>
<div class="ab" style="left:1572.0px;top:324px;width:3px;height:3px;border-radius:50%;background:#4e5969"></div>
<svg style="left:15px;top:353px" width="10" height="6"><path d="M0.5 0.5 H9.5 L5 5.5 Z" fill="#62646a"/></svg>
<div class="ab" style="left:40px;top:348px;width:16px;height:16px;border:1px solid #a3a7b5;border-radius:2px;background:#fff"></div>
<div class="t" style="left:68px;top:351.5px;font-size:13px;font-weight:bold;color:#1d2129">张屋农业公司</div>
<div class="t" style="right:1333px;top:352px;font-size:12px;color:#86909c">1</div>
<div class="ab" style="left:0px;top:373px;width:1590px;height:1px;background:#e1e1e1"></div>
<div class="ab" style="left:40px;top:383px;width:16px;height:16px;border:1px solid #a3a7b5;border-radius:2px;background:#fff"></div>
<div class="ab" style="left:67px;top:373px;width:1px;height:34px;background:#e1e1e1"></div>
<div class="ab" style="left:361px;top:373px;width:1px;height:34px;background:#e1e1e1"></div>
<div class="ab" style="left:511px;top:373px;width:1px;height:34px;background:#e1e1e1"></div>
<div class="ab" style="left:661px;top:373px;width:1px;height:34px;background:#e1e1e1"></div>
<div class="ab" style="left:811px;top:373px;width:1px;height:34px;background:#e1e1e1"></div>
<div class="ab" style="left:961px;top:373px;width:1px;height:34px;background:#e1e1e1"></div>
<div class="ab" style="left:1111px;top:373px;width:1px;height:34px;background:#e1e1e1"></div>
<div class="ab" style="left:1261px;top:373px;width:1px;height:34px;background:#e1e1e1"></div>
<div class="ab" style="left:1451px;top:373px;width:1px;height:34px;background:#e1e1e1"></div>
<div class="t" style="left:76px;top:387px;font-size:13px;color:#222">张屋农业公司</div>
<div class="t" style="right:1236px;top:387px;font-size:13px;color:#222;letter-spacing:-0.25px">600</div>
<div class="t" style="right:1086px;top:387px;font-size:13px;color:#222;letter-spacing:-0.25px">78.00%</div>
<div class="t" style="right:936px;top:387px;font-size:13px;color:#222;letter-spacing:-0.25px">702000.00</div>
<div class="ab" style="left:670px;top:380px;width:76px;height:26px;border-radius:13px;background:#ff9a3c;color:#fff;font-size:13px;line-height:26px;text-align:center">审核通过</div>
<div class="t" style="left:820px;top:386px;font-size:13px;color:#1473f0">191改改改</div>
<div class="t" style="left:970px;top:387px;font-size:13px;color:#222;letter-spacing:-0.25px">2023-07-20 17:29:48</div>
<div class="t" style="left:1120px;top:387px;font-size:13px;color:#222;letter-spacing:-0.25px">2023-07-20 17:29:48</div>
<div class="t" style="left:1270px;top:387px;font-size:13px;color:#222;letter-spacing:-0.3px">562a2e9afb30e5b46000001e</div>
<div class="ab" style="left:1458px;top:380px;width:92px;height:26px;border-radius:4px;background:#0066ff"></div>
<svg style="left:1466px;top:386px" width="14" height="14"><path d="M0.7 7 L3.85 1.5 H10.15 L13.3 7 L10.15 12.5 H3.85 Z" fill="none" stroke="#fff" stroke-width="1.4"/><circle cx="7" cy="7" r="2.4" fill="none" stroke="#fff" stroke-width="1.4"/></svg>
<div class="t" style="left:1486px;top:386px;font-size:14px;color:#fff">新增产品</div>
<div class="ab" style="left:1556px;top:380px;width:26px;height:26px;border-radius:4px;background:#eff0f4"></div>
<div class="ab" style="left:1563.0px;top:392px;width:3px;height:3px;border-radius:50%;background:#4e5969"></div>
<div class="ab" style="left:1567.5px;top:392px;width:3px;height:3px;border-radius:50%;background:#4e5969"></div>
<div class="ab" style="left:1572.0px;top:392px;width:3px;height:3px;border-radius:50%;background:#4e5969"></div>
<svg style="left:15px;top:421px" width="10" height="6"><path d="M0.5 0.5 H9.5 L5 5.5 Z" fill="#62646a"/></svg>
<div class="ab" style="left:40px;top:416px;width:16px;height:16px;border:1px solid #a3a7b5;border-radius:2px;background:#fff"></div>
<div class="t" style="left:68px;top:419.5px;font-size:13px;font-weight:bold;color:#1d2129">强行材料公司</div>
<div class="t" style="right:1333px;top:420px;font-size:12px;color:#86909c">1</div>
<div class="ab" style="left:0px;top:441px;width:1590px;height:1px;background:#e1e1e1"></div>
<div class="ab" style="left:40px;top:451px;width:16px;height:16px;border:1px solid #a3a7b5;border-radius:2px;background:#fff"></div>
<div class="ab" style="left:67px;top:441px;width:1px;height:34px;background:#e1e1e1"></div>
<div class="ab" style="left:361px;top:441px;width:1px;height:34px;background:#e1e1e1"></div>
<div class="ab" style="left:511px;top:441px;width:1px;height:34px;background:#e1e1e1"></div>
<div class="ab" style="left:661px;top:441px;width:1px;height:34px;background:#e1e1e1"></div>
<div class="ab" style="left:811px;top:441px;width:1px;height:34px;background:#e1e1e1"></div>
<div class="ab" style="left:961px;top:441px;width:1px;height:34px;background:#e1e1e1"></div>
<div class="ab" style="left:1111px;top:441px;width:1px;height:34px;background:#e1e1e1"></div>
<div class="ab" style="left:1261px;top:441px;width:1px;height:34px;background:#e1e1e1"></div>
<div class="ab" style="left:1451px;top:441px;width:1px;height:34px;background:#e1e1e1"></div>
<div class="t" style="left:76px;top:455px;font-size:13px;color:#222">强行材料公司</div>
<div class="t" style="right:1236px;top:455px;font-size:13px;color:#222;letter-spacing:-0.25px">20</div>
<div class="t" style="right:1086px;top:455px;font-size:13px;color:#222;letter-spacing:-0.25px">90.00%</div>
<div class="t" style="right:936px;top:455px;font-size:13px;color:#222;letter-spacing:-0.25px">8100000.00</div>
<div class="ab" style="left:670px;top:448px;width:76px;height:26px;border-radius:13px;background:#ff9a3c;color:#fff;font-size:13px;line-height:26px;text-align:center">审核通过</div>
<div class="t" style="left:820px;top:454px;font-size:13px;color:#1473f0">191改改改</div>
<div class="t" style="left:970px;top:455px;font-size:13px;color:#222;letter-spacing:-0.25px">2023-07-20 17:29:48</div>
<div class="t" style="left:1120px;top:455px;font-size:13px;color:#222;letter-spacing:-0.25px">2023-07-20 17:29:48</div>
<div class="t" style="left:1270px;top:455px;font-size:13px;color:#222;letter-spacing:-0.3px">562a2e9afdabe99460000024</div>
<div class="ab" style="left:1458px;top:448px;width:92px;height:26px;border-radius:4px;background:#0066ff"></div>
<svg style="left:1466px;top:454px" width="14" height="14"><path d="M0.7 7 L3.85 1.5 H10.15 L13.3 7 L10.15 12.5 H3.85 Z" fill="none" stroke="#fff" stroke-width="1.4"/><circle cx="7" cy="7" r="2.4" fill="none" stroke="#fff" stroke-width="1.4"/></svg>
<div class="t" style="left:1486px;top:454px;font-size:14px;color:#fff">新增产品</div>
<div class="ab" style="left:1556px;top:448px;width:26px;height:26px;border-radius:4px;background:#eff0f4"></div>
<div class="ab" style="left:1563.0px;top:460px;width:3px;height:3px;border-radius:50%;background:#4e5969"></div>
<div class="ab" style="left:1567.5px;top:460px;width:3px;height:3px;border-radius:50%;background:#4e5969"></div>
<div class="ab" style="left:1572.0px;top:460px;width:3px;height:3px;border-radius:50%;background:#4e5969"></div>
<svg style="left:15px;top:489px" width="10" height="6"><path d="M0.5 0.5 H9.5 L5 5.5 Z" fill="#62646a"/></svg>
<div class="ab" style="left:40px;top:484px;width:16px;height:16px;border:1px solid #a3a7b5;border-radius:2px;background:#fff"></div>
<div class="t" style="left:68px;top:487.5px;font-size:13px;font-weight:bold;color:#1d2129">恒太方材料公司</div>
<div class="t" style="right:1333px;top:488px;font-size:12px;color:#86909c">1</div>
<div class="ab" style="left:0px;top:509px;width:1590px;height:1px;background:#e1e1e1"></div>
<div class="ab" style="left:40px;top:519px;width:16px;height:16px;border:1px solid #a3a7b5;border-radius:2px;background:#fff"></div>
<div class="ab" style="left:67px;top:509px;width:1px;height:34px;background:#e1e1e1"></div>
<div class="ab" style="left:361px;top:509px;width:1px;height:34px;background:#e1e1e1"></div>
<div class="ab" style="left:511px;top:509px;width:1px;height:34px;background:#e1e1e1"></div>
<div class="ab" style="left:661px;top:509px;width:1px;height:34px;background:#e1e1e1"></div>
<div class="ab" style="left:811px;top:509px;width:1px;height:34px;background:#e1e1e1"></div>
<div class="ab" style="left:961px;top:509px;width:1px;height:34px;background:#e1e1e1"></div>
<div class="ab" style="left:1111px;top:509px;width:1px;height:34px;background:#e1e1e1"></div>
<div class="ab" style="left:1261px;top:509px;width:1px;height:34px;background:#e1e1e1"></div>
<div class="ab" style="left:1451px;top:509px;width:1px;height:34px;background:#e1e1e1"></div>
<div class="t" style="left:76px;top:523px;font-size:13px;color:#222">恒太方材料公司</div>
<div class="t" style="right:1236px;top:523px;font-size:13px;color:#222;letter-spacing:-0.25px">60</div>
<div class="t" style="right:1086px;top:523px;font-size:13px;color:#222;letter-spacing:-0.25px">75.00%</div>
<div class="t" style="right:936px;top:523px;font-size:13px;color:#222;letter-spacing:-0.25px">135.00</div>
<div class="ab" style="left:670px;top:516px;width:62px;height:26px;border-radius:13px;background:#0066ff;color:#fff;font-size:13px;line-height:26px;text-align:center">审核中</div>
<div class="t" style="left:820px;top:522px;font-size:13px;color:#1473f0">191改改改</div>
<div class="t" style="left:970px;top:523px;font-size:13px;color:#222;letter-spacing:-0.25px">2023-07-20 17:29:48</div>
<div class="t" style="left:1120px;top:523px;font-size:13px;color:#222;letter-spacing:-0.25px">2023-07-20 17:29:48</div>
<div class="t" style="left:1270px;top:523px;font-size:13px;color:#222;letter-spacing:-0.3px">562a2e9af233ab6460000016</div>
<div class="ab" style="left:1458px;top:516px;width:92px;height:26px;border-radius:4px;background:#f2f2f3;border:1px solid #e3e3e3"></div>
<svg style="left:1466px;top:522px" width="14" height="14"><path d="M0.7 7 L3.85 1.5 H10.15 L13.3 7 L10.15 12.5 H3.85 Z" fill="none" stroke="#c6c6c8" stroke-width="1.4"/><circle cx="7" cy="7" r="2.4" fill="none" stroke="#c6c6c8" stroke-width="1.4"/></svg>
<div class="t" style="left:1486px;top:522px;font-size:14px;color:#c6c6c8">新增产品</div>
<div class="ab" style="left:1556px;top:516px;width:26px;height:26px;border-radius:4px;background:#eff0f4"></div>
<div class="ab" style="left:1563.0px;top:528px;width:3px;height:3px;border-radius:50%;background:#4e5969"></div>
<div class="ab" style="left:1567.5px;top:528px;width:3px;height:3px;border-radius:50%;background:#4e5969"></div>
<div class="ab" style="left:1572.0px;top:528px;width:3px;height:3px;border-radius:50%;background:#4e5969"></div>
<svg style="left:15px;top:557px" width="10" height="6"><path d="M0.5 0.5 H9.5 L5 5.5 Z" fill="#62646a"/></svg>
<div class="ab" style="left:40px;top:552px;width:16px;height:16px;border:1px solid #a3a7b5;border-radius:2px;background:#fff"></div>
<div class="t" style="left:68px;top:555.5px;font-size:13px;font-weight:bold;color:#1d2129">新昌环保公司</div>
<div class="t" style="right:1333px;top:556px;font-size:12px;color:#86909c">1</div>
<div class="ab" style="left:0px;top:577px;width:1590px;height:1px;background:#e1e1e1"></div>
<div class="ab" style="left:40px;top:587px;width:16px;height:16px;border:1px solid #a3a7b5;border-radius:2px;background:#fff"></div>
<div class="ab" style="left:67px;top:577px;width:1px;height:34px;background:#e1e1e1"></div>
<div class="ab" style="left:361px;top:577px;width:1px;height:34px;background:#e1e1e1"></div>
<div class="ab" style="left:511px;top:577px;width:1px;height:34px;background:#e1e1e1"></div>
<div class="ab" style="left:661px;top:577px;width:1px;height:34px;background:#e1e1e1"></div>
<div class="ab" style="left:811px;top:577px;width:1px;height:34px;background:#e1e1e1"></div>
<div class="ab" style="left:961px;top:577px;width:1px;height:34px;background:#e1e1e1"></div>
<div class="ab" style="left:1111px;top:577px;width:1px;height:34px;background:#e1e1e1"></div>
<div class="ab" style="left:1261px;top:577px;width:1px;height:34px;background:#e1e1e1"></div>
<div class="ab" style="left:1451px;top:577px;width:1px;height:34px;background:#e1e1e1"></div>
<div class="t" style="left:76px;top:591px;font-size:13px;color:#222">新昌环保公司</div>
<div class="t" style="right:1236px;top:591px;font-size:13px;color:#222;letter-spacing:-0.25px">120</div>
<div class="t" style="right:1086px;top:591px;font-size:13px;color:#222;letter-spacing:-0.25px">75.00%</div>
<div class="t" style="right:936px;top:591px;font-size:13px;color:#222;letter-spacing:-0.25px">360.00</div>
<div class="ab" style="left:670px;top:584px;width:76px;height:26px;border-radius:13px;background:#ff9a3c;color:#fff;font-size:13px;line-height:26px;text-align:center">审核通过</div>
<div class="t" style="left:820px;top:590px;font-size:13px;color:#1473f0">191改改改</div>
<div class="t" style="left:970px;top:591px;font-size:13px;color:#222;letter-spacing:-0.25px">2023-07-20 17:29:48</div>
<div class="t" style="left:1120px;top:591px;font-size:13px;color:#222;letter-spacing:-0.25px">2026-01-09 15:35:48</div>
<div class="t" style="left:1270px;top:591px;font-size:13px;color:#222;letter-spacing:-0.3px">562a2e9af1fac73460000018</div>
<div class="ab" style="left:1458px;top:584px;width:92px;height:26px;border-radius:4px;background:#0066ff"></div>
<svg style="left:1466px;top:590px" width="14" height="14"><path d="M0.7 7 L3.85 1.5 H10.15 L13.3 7 L10.15 12.5 H3.85 Z" fill="none" stroke="#fff" stroke-width="1.4"/><circle cx="7" cy="7" r="2.4" fill="none" stroke="#fff" stroke-width="1.4"/></svg>
<div class="t" style="left:1486px;top:590px;font-size:14px;color:#fff">新增产品</div>
<div class="ab" style="left:1556px;top:584px;width:26px;height:26px;border-radius:4px;background:#eff0f4"></div>
<div class="ab" style="left:1563.0px;top:596px;width:3px;height:3px;border-radius:50%;background:#4e5969"></div>
<div class="ab" style="left:1567.5px;top:596px;width:3px;height:3px;border-radius:50%;background:#4e5969"></div>
<div class="ab" style="left:1572.0px;top:596px;width:3px;height:3px;border-radius:50%;background:#4e5969"></div>
</div>
<div class="ab" style="left:293px;top:837px;width:1590px;height:1px;background:#e1e1e1"></div>
<div class="ab" style="left:360px;top:837px;width:1px;height:34px;background:#e1e1e1"></div>
<div class="ab" style="left:654px;top:837px;width:1px;height:34px;background:#e1e1e1"></div>
<div class="ab" style="left:954px;top:837px;width:1px;height:34px;background:#e1e1e1"></div>
<div class="ab" style="left:1104px;top:837px;width:1px;height:34px;background:#e1e1e1"></div>
<div class="ab" style="left:1254px;top:837px;width:1px;height:34px;background:#e1e1e1"></div>
<div class="ab" style="left:1404px;top:837px;width:1px;height:34px;background:#e1e1e1"></div>
<div class="ab" style="left:1554px;top:837px;width:1px;height:34px;background:#e1e1e1"></div>
<div class="ab" style="left:1744px;top:837px;width:1px;height:34px;background:#e1e1e1"></div>
<div class="ab" style="left:293px;top:871px;width:1590px;height:1px;background:#e1e1e1"></div>
<div class="ab" style="left:1321px;top:872px;width:562px;height:8px;border-radius:4px;background:#b4b4b4"></div>
<div class="ab" style="left:1883px;top:166px;width:8px;height:340px;border-radius:4px;background:#b4b4b4"></div>
<div class="ab" style="left:282px;top:891px;width:1609px;height:1px;background:#e0e0e0"></div>
<div class="ab" style="left:292px;top:902px;width:30px;height:34px;border:1px solid #e0e0e0;border-radius:4px;background:#fff"></div>
<svg style="left:300px;top:911px" width="14" height="12"><path d="M2.5 0.5 V11.5 M0.5 2.5 L2.5 0.5 L4.5 2.5 M0.5 9.5 L2.5 11.5 L4.5 9.5 M7 2 H13.5 M7 6 H13.5 M7 10 H13.5" fill="none" stroke="#4a4d53" stroke-width="1.1"/></svg>
<div class="t" style="left:333px;top:910px;font-size:14px;color:#1d2129">共20条</div>
<svg style="left:396px;top:911px" width="11" height="10"><path d="M0.5 1 L5.5 5 L10.5 1 M0.5 9 H10.5" fill="none" stroke="#4a4d53" stroke-width="1.1"/></svg>
<div class="t" style="left:415px;top:910px;font-size:14px;color:#1d2129">展开全部</div>
<svg style="left:495px;top:911px" width="11" height="10"><path d="M0.5 0.5 H10.5 M0.5 8.5 L5.5 4 L10.5 8.5" fill="none" stroke="#4a4d53" stroke-width="1.1"/></svg>
<div class="t" style="left:515px;top:910px;font-size:14px;color:#1d2129">收起全部</div>
<svg style="left:1792px;top:882px" width="14" height="20"><path d="M0.5 0.5 V16 L4.3 12.5 L7 18.5 L9.3 17.5 L6.7 11.7 L11.5 11.5 Z" fill="#fff" stroke="#222" stroke-width="1"/></svg>
</body></html>
